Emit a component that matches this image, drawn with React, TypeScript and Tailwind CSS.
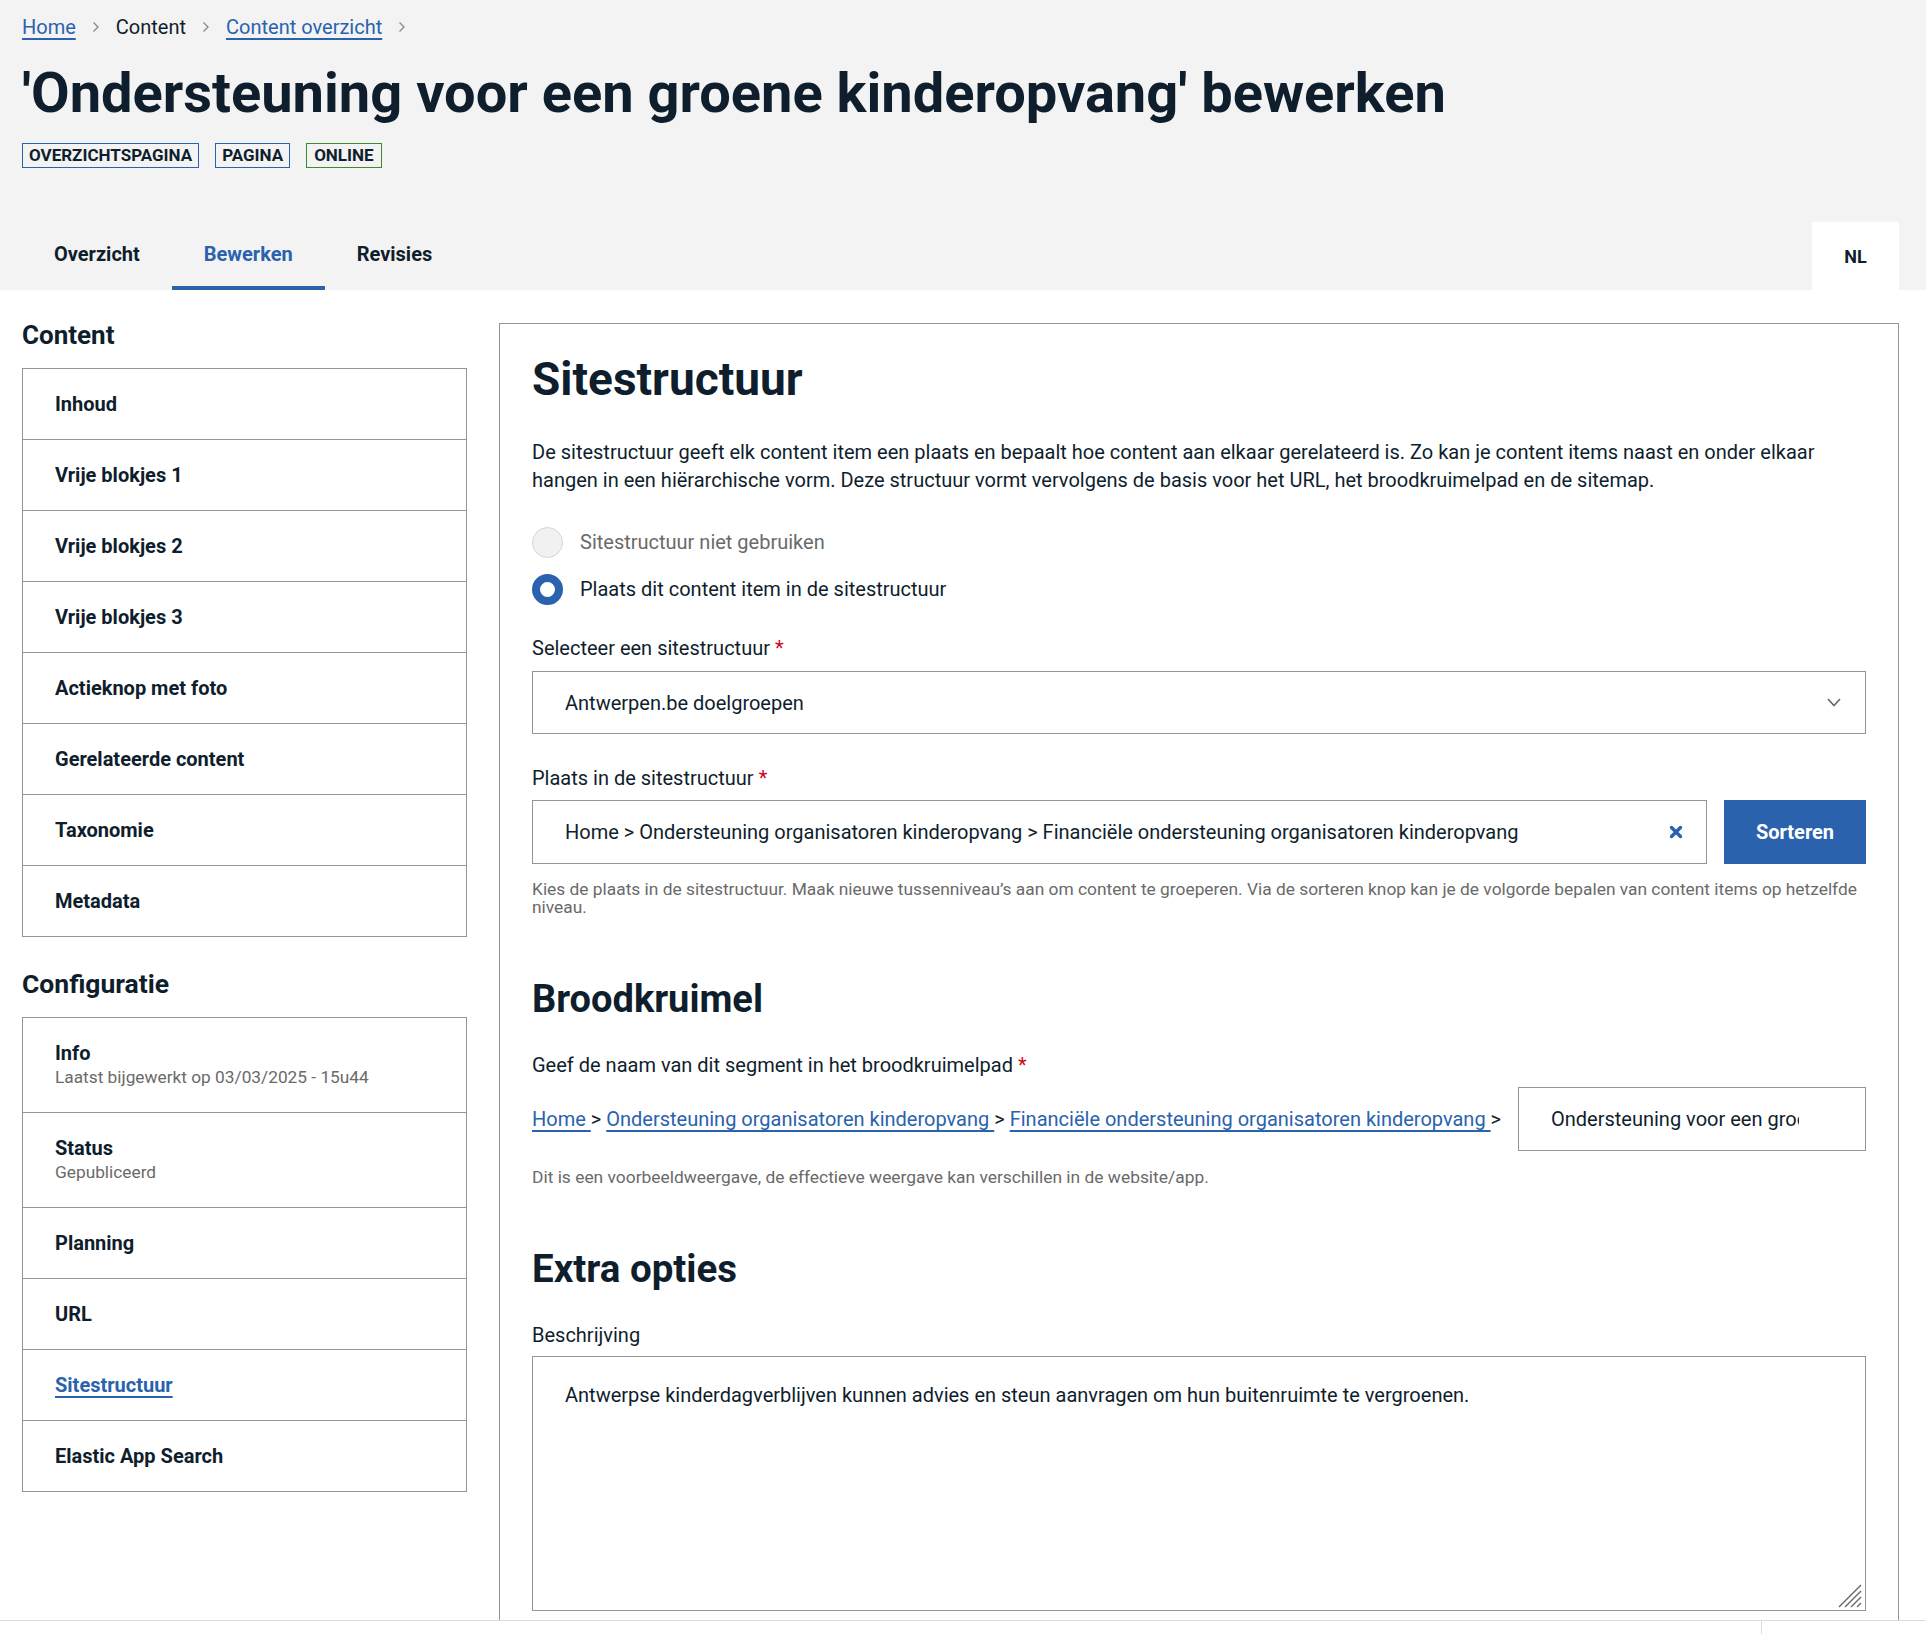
import React from "react";

const Chevron = () => (
  <svg width="8" height="12" viewBox="0 0 8 12" className="mx-[16px] shrink-0">
    <polyline points="1.5,1.5 6,6 1.5,10.5" fill="none" stroke="#8a8a8a" strokeWidth="1.4" />
  </svg>
);

const Required = () => <span className="text-[#d0021b] ml-[5px]">*</span>;

const NavRow = ({ label, sub, active }: { label: string; sub?: string; active?: boolean }) => (
  <div>
    <div className={`pl-8 pr-4 flex flex-col justify-center ${sub ? "py-[23px]" : "h-[70px]"}`}>
      <div
        className={`text-[20px] leading-[24px] font-bold ${
          active ? "text-[#2a62ae] underline underline-offset-[4px] decoration-[2px]" : "text-[#0f1e2d]"
        }`}
      >
        {label}
      </div>
      {sub && <div className="text-[17.3px] leading-[24px] text-[#6a6a6a]">{sub}</div>}
    </div>
  </div>
);

export default function App() {
  const contentItems = [
    "Inhoud",
    "Vrije blokjes 1",
    "Vrije blokjes 2",
    "Vrije blokjes 3",
    "Actieknop met foto",
    "Gerelateerde content",
    "Taxonomie",
    "Metadata",
  ];
  return (
    <div className="font-['Roboto',sans-serif] text-[#0f1e2d] bg-white min-h-screen">
      <header className="bg-[#f3f3f3] pl-[22px] pr-[27px] pt-[14px]">
        <nav className="flex items-center h-[26px] text-[20px] leading-[26px]">
          <a className="text-[#2a62ae] underline underline-offset-[4px]">Home</a>
          <Chevron />
          <span>Content</span>
          <Chevron />
          <a className="text-[#2a62ae] underline underline-offset-[4px]">Content overzicht</a>
          <Chevron />
        </nav>
        <h1 className="mt-[20px] text-[56px] leading-[66px] font-bold">
          'Ondersteuning voor een groene kinderopvang' bewerken
        </h1>
        <div className="mt-[17px] flex gap-[16px]">
          <span className="h-[25px] px-[6px] flex items-center border border-[#2a62ae] text-[17px] font-bold">
            OVERZICHTSPAGINA
          </span>
          <span className="h-[25px] px-[6px] flex items-center border border-[#2a62ae] text-[17px] font-bold">
            PAGINA
          </span>
          <span className="h-[25px] px-[7px] flex items-center border border-[#3f8a2b] text-[17px] font-bold">
            ONLINE
          </span>
        </div>
        <div className="mt-[54px] flex items-end justify-between">
          <div className="flex">
            <div className="h-[68px] px-8 flex items-center pb-1 text-[20px] font-bold">Overzicht</div>
            <div className="h-[68px] px-8 flex items-center pb-1 text-[20px] font-bold text-[#2a62ae] border-b-4 border-[#2a62ae] pt-1">
              Bewerken
            </div>
            <div className="h-[68px] px-8 flex items-center pb-1 text-[20px] font-bold">Revisies</div>
          </div>
          <div className="w-[87px] h-[68px] bg-white flex items-center justify-center text-[18px] font-bold">NL</div>
        </div>
      </header>

      <main className="flex items-start gap-8 pl-[22px] pr-[27px] pt-[29px]">
        <aside className="w-[445px] shrink-0">
          <h2 className="text-[26px] leading-[32px] font-bold">Content</h2>
          <div className="mt-[17px] border border-[#959595] divide-y divide-[#959595]">
            {contentItems.map((c) => (
              <NavRow key={c} label={c} />
            ))}
          </div>
          <h2 className="mt-[31px] text-[26.5px] leading-[32px] font-bold">Configuratie</h2>
          <div className="mt-[17px] border border-[#959595] divide-y divide-[#959595]">
            <NavRow label="Info" sub="Laatst bijgewerkt op 03/03/2025 - 15u44" />
            <NavRow label="Status" sub="Gepubliceerd" />
            <NavRow label="Planning" />
            <NavRow label="URL" />
            <NavRow label="Sitestructuur" active />
            <NavRow label="Elastic App Search" />
          </div>
        </aside>

        <section className="flex-1 mt-[4px] border border-[#959595] px-8 pt-[27px] pb-[120px]">
          <h2 className="text-[46px] leading-[56px] font-bold">Sitestructuur</h2>
          <p className="mt-[31px] text-[20px] leading-[28px]">
            De sitestructuur geeft elk content item een plaats en bepaalt hoe content aan elkaar gerelateerd is. Zo kan je
            content items naast en onder elkaar
            <br />
            hangen in een hiërarchische vorm. Deze structuur vormt vervolgens de basis voor het URL, het broodkruimelpad en
            de sitemap.
          </p>

          <div className="mt-[32px] flex items-center h-[32px] gap-[17px]">
            <span className="w-[31px] h-[31px] rounded-full bg-[#f1f1f1] border border-[#d6d6d6] shrink-0" />
            <span className="text-[20px] text-[#6a6a6a]">Sitestructuur niet gebruiken</span>
          </div>
          <div className="mt-[15px] flex items-center h-[32px] gap-[17px]">
            <span className="w-[31px] h-[31px] rounded-full bg-white border-[8.5px] border-[#2a62ae] shrink-0" />
            <span className="text-[20px]">Plaats dit content item in de sitestructuur</span>
          </div>

          <div className="mt-[31px] text-[20px] leading-[24px]">
            Selecteer een sitestructuur
            <Required />
          </div>
          <div className="mt-[11px] h-[63px] border border-[#959595] flex items-center justify-between pl-8 pr-[24px]">
            <span className="text-[20px]">Antwerpen.be doelgroepen</span>
            <svg width="14" height="9" viewBox="0 0 14 9">
              <polyline points="1,1 7,7.5 13,1" fill="none" stroke="#666" strokeWidth="1.6" />
            </svg>
          </div>

          <div className="mt-[32px] text-[20px] leading-[24px]">
            Plaats in de sitestructuur
            <Required />
          </div>
          <div className="mt-[10px] flex gap-[17px]">
            <div className="flex-1 h-[64px] border border-[#959595] flex items-center justify-between pl-8 pr-[23px]">
              <span className="text-[20px]">
                Home &gt; Ondersteuning organisatoren kinderopvang &gt; Financiële ondersteuning organisatoren kinderopvang
              </span>
              <svg width="14" height="14" viewBox="0 0 14 14">
                <path d="M2.5 2.5 L11.5 11.5 M11.5 2.5 L2.5 11.5" stroke="#2a62ae" strokeWidth="3.4" strokeLinecap="round" />
              </svg>
            </div>
            <button className="w-[142px] h-[64px] bg-[#2a62ae] text-white text-[20px] font-bold">Sorteren</button>
          </div>
          <p className="mt-[16px] text-[17.35px] leading-[18px] text-[#6a6a6a]">
            Kies de plaats in de sitestructuur. Maak nieuwe tussenniveau’s aan om content te groeperen. Via de sorteren knop
            kan je de volgorde bepalen van content items op hetzelfde
            <br />
            niveau.
          </p>

          <h2 className="mt-[59px] text-[38px] leading-[48px] font-bold">Broodkruimel</h2>
          <div className="mt-[30px] text-[20px] leading-[24px]">
            Geef de naam van dit segment in het broodkruimelpad
            <Required />
          </div>
          <div className="mt-[10px] flex items-center">
            <div className="flex-1 min-w-0 text-[20px] text-[#2a62ae] flex items-center whitespace-pre">
              <a className="underline underline-offset-[4px]">Home </a>
              <span className="text-[#0f1e2d] mr-[5px]">&gt;</span>
              <a className="underline underline-offset-[4px]">Ondersteuning organisatoren kinderopvang </a>
              <span className="text-[#0f1e2d] mr-[5px]">&gt;</span>
              <a className="underline underline-offset-[4px]">Financiële ondersteuning organisatoren kinderopvang </a>
              <span className="text-[#0f1e2d]">&gt;</span>
            </div>
            <input
              readOnly
              defaultValue="Ondersteuning voor een groene kinderopvang"
              className="w-[348px] h-[64px] border border-[#959595] pl-8 pr-[66px] text-[20px] text-[#0f1e2d] outline-none"
            />
          </div>
          <p className="mt-[17px] text-[17.4px] leading-[18px] text-[#6a6a6a]">
            Dit is een voorbeeldweergave, de effectieve weergave kan verschillen in de website/app.
          </p>

          <h2 className="mt-[59px] text-[38.5px] leading-[48px] font-bold">Extra opties</h2>
          <div className="mt-[30px] text-[20px] leading-[24px]">Beschrijving</div>
          <div className="relative mt-[9px]">
            <textarea
              readOnly
              defaultValue="Antwerpse kinderdagverblijven kunnen advies en steun aanvragen om hun buitenruimte te vergroenen."
              className="block w-full h-[255px] resize-none border border-[#959595] px-8 pt-[24px] text-[20px] leading-[28px] text-[#0f1e2d] outline-none"
            />
            <svg width="26" height="26" viewBox="0 0 26 26" className="absolute right-[3px] bottom-[3px] pointer-events-none">
              <g stroke="#6a6a6a" strokeWidth="1.5">
                <line x1="2" y1="25" x2="24" y2="3" />
                <line x1="8" y1="25" x2="24" y2="9" />
                <line x1="14" y1="25" x2="24" y2="15" />
                <line x1="20" y1="25" x2="24" y2="21" />
              </g>
            </svg>
          </div>
        </section>
      </main>

      <div className="fixed left-0 right-0 bottom-0 h-[14px] bg-white border-t border-[#dcdcdc] flex">
        <div className="flex-1" />
        <div className="w-[165px] border-l border-[#dcdcdc]" />
      </div>
    </div>
  );
}
